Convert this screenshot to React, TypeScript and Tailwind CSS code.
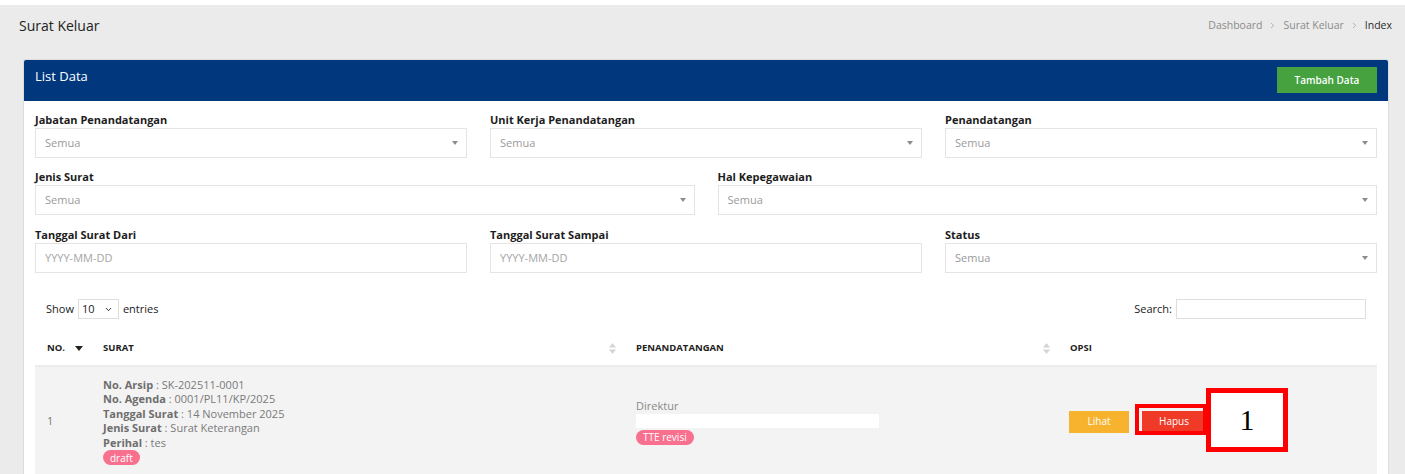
import { ChevronDown, ChevronRight } from "lucide-react";

const font = { fontFamily: '"Open Sans", "Liberation Sans", sans-serif' };

function SelectBox({ placeholder = "Semua" }: { placeholder?: string }) {
  return (
    <div className="flex h-[30px] items-center justify-between border border-[#e4e4e4] bg-white pl-[9px] pr-[8px]">
      <span className="text-[11px] text-[#9a9a9a]">{placeholder}</span>
      <svg width="6" height="4" viewBox="0 0 6 4" className="text-[#8c8c8c]">
        <path d="M0 0h6L3 4z" fill="currentColor" />
      </svg>
    </div>
  );
}

function DateBox() {
  return (
    <div className="flex h-[30px] items-center border border-[#e4e4e4] bg-white pl-[9px]">
      <span className="text-[11px] text-[#a5a5a5]">YYYY-MM-DD</span>
    </div>
  );
}

function Field({ label, children }: { label: string; children: React.ReactNode }) {
  return (
    <div className="flex flex-col">
      <label className="mb-[1px] h-[14px] text-[11px] font-bold leading-[14px] text-[#1d1d1d]">{label}</label>
      {children}
    </div>
  );
}

function SortBoth() {
  return (
    <svg width="7" height="11" viewBox="0 0 7 11">
      <path d="M0 4.5L3.5 0L7 4.5z" fill="#d4d4d4" />
      <path d="M0 6.5L3.5 11L7 6.5z" fill="#d4d4d4" />
    </svg>
  );
}

function SortDesc() {
  return (
    <svg width="8" height="5" viewBox="0 0 8 5">
      <path d="M0 0h8L4 5z" fill="#222" />
    </svg>
  );
}

function Badge({ children }: { children: React.ReactNode }) {
  return (
    <span className="inline-flex h-[15px] items-center rounded-full bg-[#f9708f] px-[7px] text-[10px] leading-none text-white">
      {children}
    </span>
  );
}

export default function App() {
  return (
    <div className="relative min-h-[474px] bg-white pt-[5px]" style={font}>
      <div className="min-h-[469px] bg-[#ebebeb] pb-4">
        <div className="flex h-[40px] items-center justify-between pl-[19px] pr-[13px] pt-[1px]">
          <h1 className="text-[14px] text-[#222]">Surat Keluar</h1>
          <nav className="flex items-center gap-[6px] text-[10.5px] text-[#8a8a8a]">
            <span>Dashboard</span>
            <ChevronRight size={9} strokeWidth={2} className="text-[#999]" />
            <span>Surat Keluar</span>
            <ChevronRight size={9} strokeWidth={2} className="text-[#999]" />
            <span className="font-medium text-[#2a2a2a]">Index</span>
          </nav>
        </div>

        <div className="ml-[23px] mr-[16px] mt-[14px] overflow-hidden rounded-t-[3px] border border-[#dcdcdc] bg-white">
          <div className="flex h-[41px] items-start justify-between bg-[#00377d] pl-[11px] pr-[11px] pt-[7px]">
            <h2 className="text-[13px] leading-[18px] text-white">List Data</h2>
            <button
              type="button"
              className="flex h-[26px] w-[100px] items-center justify-center bg-[#45a23f] text-[10px] font-semibold text-white"
            >
              Tambah Data
            </button>
          </div>

          <div className="px-[11px] pt-[12px]">
            <div className="grid grid-cols-3 gap-x-[23px]">
              <Field label="Jabatan Penandatangan">
                <SelectBox />
              </Field>
              <Field label="Unit Kerja Penandatangan">
                <SelectBox />
              </Field>
              <Field label="Penandatangan">
                <SelectBox />
              </Field>
            </div>
            <div className="mt-[12px] grid grid-cols-2 gap-x-[23px]">
              <Field label="Jenis Surat">
                <SelectBox />
              </Field>
              <Field label="Hal Kepegawaian">
                <SelectBox />
              </Field>
            </div>
            <div className="mt-[13px] grid grid-cols-3 gap-x-[23px]">
              <Field label="Tanggal Surat Dari">
                <DateBox />
              </Field>
              <Field label="Tanggal Surat Sampai">
                <DateBox />
              </Field>
              <Field label="Status">
                <SelectBox />
              </Field>
            </div>

            <div className="mt-[26px] flex items-center justify-between px-[11px]">
              <div className="flex items-center gap-[4px] text-[11px] text-[#222]">
                <span>Show</span>
                <div className="flex h-[20px] w-[41px] items-center justify-between border border-[#dedede] pl-[3px] pr-[5px]">
                  <span className="text-[11px]">10</span>
                  <ChevronDown size={9} strokeWidth={2.5} />
                </div>
                <span>entries</span>
              </div>
              <div className="flex items-center gap-[4px] text-[11px] text-[#222]">
                <span>Search:</span>
                <div className="h-[20px] w-[190px] border border-[#dedede]" />
              </div>
            </div>

            <table className="mt-[12px] w-full border-collapse">
              <thead>
                <tr className="h-[35px] border-b-2 border-[#ececec] text-left text-[9.5px] font-bold uppercase text-[#222]">
                  <th className="w-[56px] pl-[12px] pr-[8px]">
                    <div className="flex items-center justify-between">
                      <span>No.</span>
                      <SortDesc />
                    </div>
                  </th>
                  <th className="w-[533px] pl-[12px] pr-[8px]">
                    <div className="flex items-center justify-between">
                      <span>Surat</span>
                      <SortBoth />
                    </div>
                  </th>
                  <th className="w-[434px] pl-[12px] pr-[8px]">
                    <div className="flex items-center justify-between">
                      <span>Penandatangan</span>
                      <SortBoth />
                    </div>
                  </th>
                  <th className="pl-[12px]">Opsi</th>
                </tr>
              </thead>
              <tbody>
                <tr className="bg-[#f3f3f3] align-middle text-[11px] text-[#7a7a7a]">
                  <td className="pl-[12px]">1</td>
                  <td className="pb-[11px] pl-[12px] pt-[11px] leading-[14.4px]">
                    <div>
                      <b className="text-[#6e6e6e]">No. Arsip</b> : SK-202511-0001
                    </div>
                    <div>
                      <b className="text-[#6e6e6e]">No. Agenda</b> : 0001/PL11/KP/2025
                    </div>
                    <div>
                      <b className="text-[#6e6e6e]">Tanggal Surat</b> : 14 November 2025
                    </div>
                    <div>
                      <b className="text-[#6e6e6e]">Jenis Surat</b> : Surat Keterangan
                    </div>
                    <div>
                      <b className="text-[#6e6e6e]">Perihal</b> : tes
                    </div>
                    <div>
                      <Badge>draft</Badge>
                    </div>
                  </td>
                  <td className="pl-[12px]">
                    <div className="text-[#8a8a8a]">Direktur</div>
                    <div className="h-[14px] w-[243px] bg-white" />
                    <div className="mt-[1px]">
                      <Badge>TTE revisi</Badge>
                    </div>
                  </td>
                  <td className="pl-[11px]">
                    <div className="flex items-center gap-[13px]">
                      <button
                        type="button"
                        className="flex h-[22px] w-[60px] items-center justify-center bg-[#f7b32d] text-[10px] text-white"
                      >
                        Lihat
                      </button>
                      <button
                        type="button"
                        className="flex h-[22px] w-[64px] items-center justify-center bg-[#f03a28] text-[10px] text-white"
                      >
                        Hapus
                      </button>
                    </div>
                  </td>
                </tr>
              </tbody>
            </table>
          </div>
        </div>
      </div>

      {/* annotation overlay */}
      <div className="absolute left-[1135px] top-[404px] h-[31px] w-[72px] border-[4px] border-[#ff0000]" />
      <div className="absolute left-[1206px] top-[388px] flex h-[64px] w-[82px] items-center justify-center border-[5px] border-[#ff0000] bg-white">
        <span className="text-[30px] leading-none text-black" style={{ fontFamily: '"Liberation Serif", serif' }}>
          1
        </span>
      </div>
    </div>
  );
}
